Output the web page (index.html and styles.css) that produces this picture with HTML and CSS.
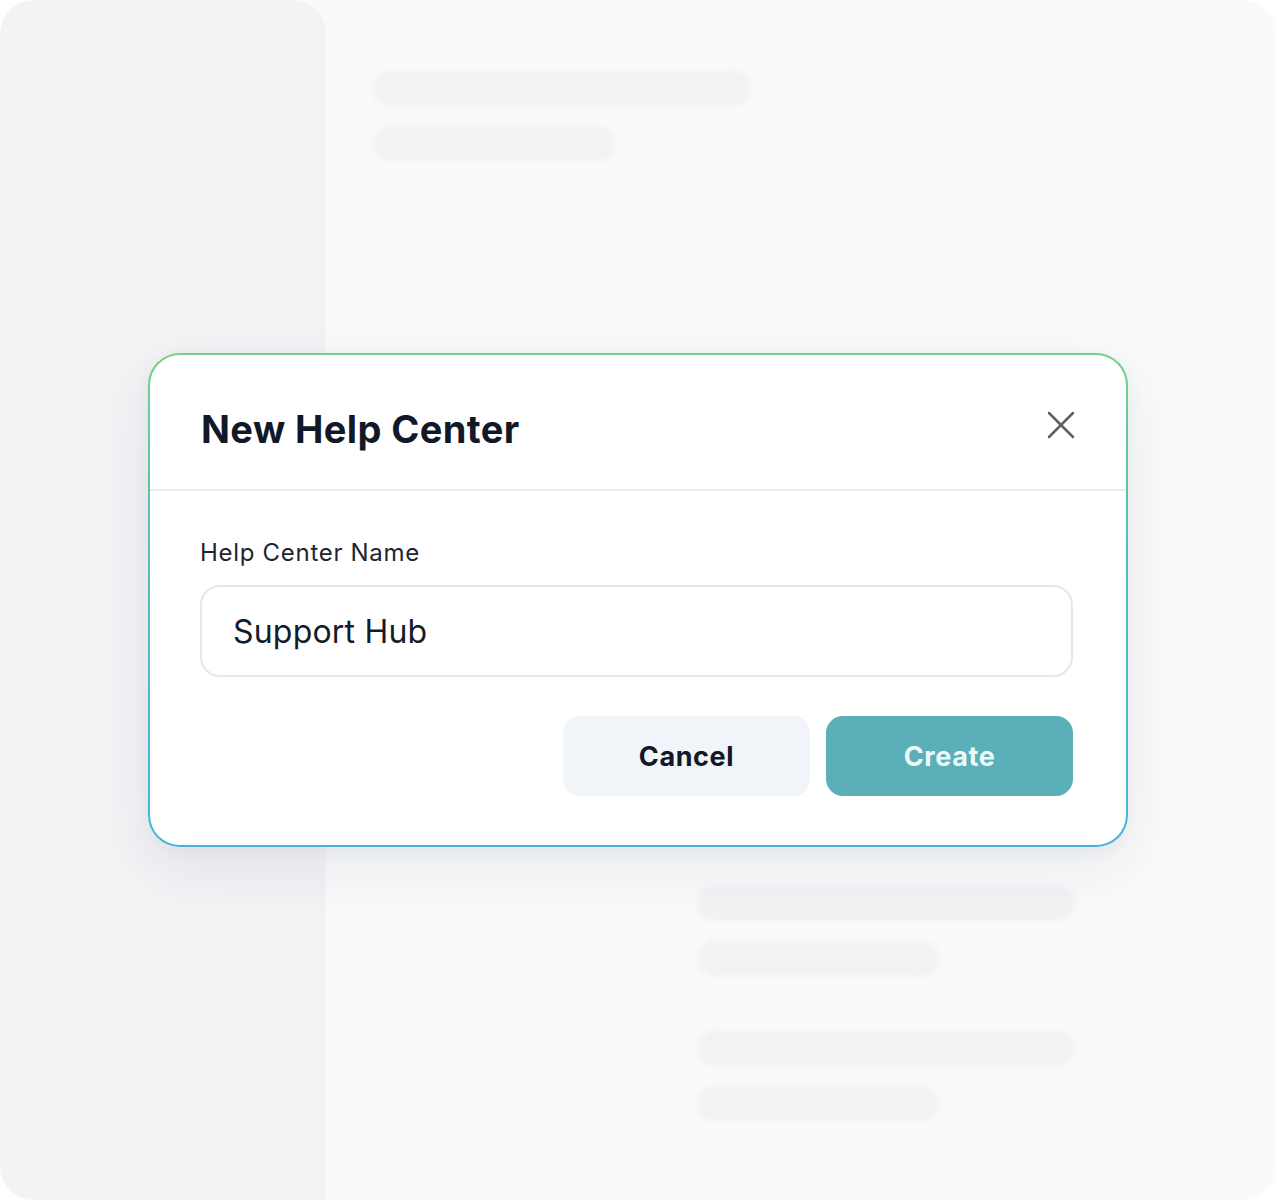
FILE: index.html
```html
<!DOCTYPE html>
<html lang="en">
<head>
<meta charset="utf-8">
<title>New Help Center</title>
<link rel="stylesheet" href="styles.css">
</head>
<body>
<div class="frame">
  <aside class="sidebar"></aside>
  <main class="main">
    <div class="skel-group">
      <div class="skel skel-long"></div>
      <div class="skel skel-short"></div>
    </div>
    <div class="skel-lower">
      <div class="skel-group">
        <div class="skel skel-long"></div>
        <div class="skel skel-short"></div>
      </div>
      <div class="skel-group">
        <div class="skel skel-long"></div>
        <div class="skel skel-short"></div>
      </div>
    </div>
  </main>

  <section class="modal" role="dialog" aria-labelledby="modal-title">
    <header class="modal-header">
      <h2 id="modal-title" class="modal-title">New Help Center</h2>
      <button class="close-btn" aria-label="Close">
        <svg width="28" height="28" viewBox="0 0 28 28" fill="none" stroke="#5f6064" stroke-width="2.5" stroke-linecap="round">
          <path d="M2 2 L26 26 M26 2 L2 26"/>
        </svg>
      </button>
    </header>
    <div class="modal-body">
      <label class="field-label" for="hc-name">Help Center Name</label>
      <div class="field-input" id="hc-name">Support Hub</div>
      <div class="actions">
        <button class="btn btn-cancel">Cancel</button>
        <button class="btn btn-create">Create</button>
      </div>
    </div>
  </section>
</div>
</body>
</html>
```

FILE: styles.css
```css
* { box-sizing: border-box; }

html, body {
  margin: 0;
  padding: 0;
  background: #ffffff;
}

body {
  font-family: "Inter", "Liberation Sans", sans-serif;
  width: 1276px;
  height: 1200px;
  overflow: hidden;
}

.frame {
  position: relative;
  width: 1276px;
  height: 1200px;
  background: #f9fafb;
  border-radius: 34px;
  overflow: hidden;
  display: grid;
  grid-template-columns: 326px 1fr;
}

.sidebar {
  background: #f3f3f6;
  border-radius: 34px 34px 0 0;
}

.main {
  padding: 72px 0 0 49px;
  display: flex;
  flex-direction: column;
}

.skel-group {
  display: flex;
  flex-direction: column;
  gap: 22px;
}

.skel {
  height: 33px;
  border-radius: 17px;
  background: #f2f2f5;
  box-shadow: 0 0 6px 2px rgba(242, 242, 245, 0.8);
}

.skel-long { width: 374px; }
.skel-short { width: 238px; }

.skel-lower {
  margin-top: 727px;
  margin-left: 324px;
  display: flex;
  flex-direction: column;
  gap: 57px;
}

.modal {
  position: absolute;
  left: 148px;
  top: 353px;
  width: 980px;
  height: 494px;
  border: 2px solid transparent;
  border-radius: 32px;
  background:
    linear-gradient(#ffffff, #ffffff) padding-box,
    linear-gradient(180deg, #74d086 0%, #53c0b8 40%, #44b4dc 100%) border-box;
  box-shadow: 0 20px 60px rgba(30, 40, 60, 0.08), 0 4px 18px rgba(30, 40, 60, 0.04);
  display: flex;
  flex-direction: column;
}

.modal-header {
  height: 136px;
  padding: 0 50px 0 51px;
  display: flex;
  align-items: center;
  justify-content: space-between;
  border-bottom: 2px solid #ececef;
}

.modal-title {
  margin: 14px 0 0 0;
  font-size: 38px;
  font-weight: 700;
  color: #111827;
  letter-spacing: 0.4px;
}

.close-btn {
  background: none;
  border: 0;
  padding: 0;
  width: 28px;
  height: 28px;
  margin-top: 6px;
  margin-right: 1px;
  cursor: pointer;
  display: flex;
}

.modal-body {
  padding: 47px 53px 0 50px;
  display: flex;
  flex-direction: column;
}

.field-label {
  font-size: 24px;
  font-weight: 400;
  color: #1f2430;
  line-height: 30px;
  letter-spacing: 0.7px;
}

.field-input {
  margin-top: 17px;
  height: 92px;
  border: 2px solid #e6e7ea;
  border-radius: 20px;
  padding: 0 31px;
  display: flex;
  align-items: center;
  font-size: 32px;
  color: #151b2b;
  letter-spacing: 0.2px;
}

.actions {
  margin-top: 39px;
  display: flex;
  justify-content: flex-end;
  gap: 16px;
}

.btn {
  width: 247px;
  height: 80px;
  border: 0;
  border-radius: 17px;
  font-family: "Inter", "Liberation Sans", sans-serif;
  font-size: 27px;
  font-weight: 700;
  letter-spacing: 0.6px;
  cursor: pointer;
}

.btn-cancel {
  background: #f1f4f8;
  color: #111827;
}

.btn-create {
  background: #5aafb8;
  color: #eefafa;
}
```
